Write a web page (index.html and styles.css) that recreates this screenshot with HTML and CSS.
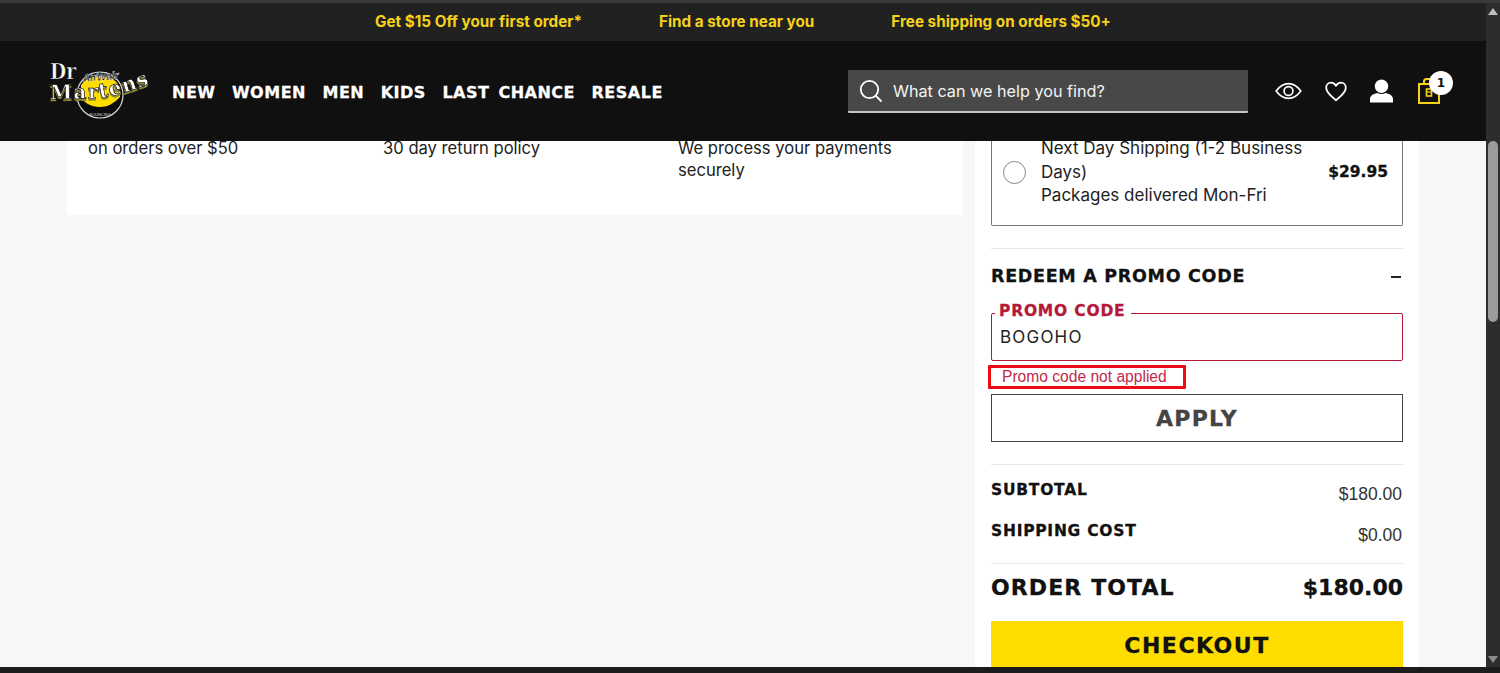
FILE: index.html
```html
<!DOCTYPE html>
<html lang="en">
<head>
  <meta charset="UTF-8">
  <meta name="viewport" content="width=device-width, initial-scale=1.0">
  <title>Dr. Martens - Checkout</title>
  <link rel="stylesheet" href="styles.css">
</head>
<body>
  <div class="window">
    <div class="viewport">
      <div class="promo-bar">
        <span>Get $15 Off your first order*</span>
        <span>Find a store near you</span>
        <span>Free shipping on orders $50+</span>
      </div>

      <header class="site-header">
        <svg class="logo" viewBox="0 -4 104 72" width="104" height="72" role="img" aria-label="Dr. Martens AirWair">
          <defs>
            <path id="logo-curve" d="M2 40 L46 39.5 Q72 37 103 24"/>
          </defs>
          <circle cx="52" cy="36" r="23" fill="#0c0c0c" stroke="#d8d8d8" stroke-width="1.2"/>
          <path d="M33 26 Q38 18 52 17 Q66 17 72 28 L72 38 Q62 49 50 48 Q38 47 33 38 Z" fill="#ffdd00"/>
          <text x="35" y="23" class="logo-air" textLength="36" lengthAdjust="spacingAndGlyphs" transform="rotate(-5 35 23)">AirWair</text>
          <text x="2" y="20" class="logo-dr" textLength="26" lengthAdjust="spacingAndGlyphs">Dr</text>
          <text class="logo-martens"><textPath href="#logo-curve">Martens</textPath></text>
          <text x="52" y="57" class="logo-small">BOUNCING</text>
        </svg>
        <nav class="main-nav">
          <a>NEW</a>
          <a>WOMEN</a>
          <a>MEN</a>
          <a>KIDS</a>
          <a>LAST CHANCE</a>
          <a>RESALE</a>
        </nav>
        <div class="search">
          <svg viewBox="0 0 24 24" width="24" height="24" fill="none" stroke="#fff" stroke-width="1.8" stroke-linecap="round">
            <circle cx="10.5" cy="10.5" r="8.7"/>
            <path d="M17 17l5 5"/>
          </svg>
          <span>What can we help you find?</span>
        </div>
        <div class="header-icons">
          <svg viewBox="0 0 28 18" width="27" height="18" fill="none" stroke="#fff" stroke-width="1.7">
            <path d="M1.2 9C5 3.8 9 1.4 14 1.4S23 3.8 26.8 9C23 14.2 19 16.6 14 16.6S5 14.2 1.2 9Z"/>
            <circle cx="14" cy="9" r="4.6"/>
          </svg>
          <svg viewBox="0 0 24 22" width="22" height="21" fill="none" stroke="#fff" stroke-width="2" stroke-linejoin="round">
            <path d="M12 20.5C7 16 1.3 12.3 1.3 6.8 1.3 3.6 3.7 1.4 6.6 1.4c2.2 0 4.2 1.2 5.4 3.4 1.2-2.2 3.2-3.4 5.4-3.4 2.9 0 5.3 2.2 5.3 5.4 0 5.5-5.7 9.2-10.7 13.7Z"/>
          </svg>
          <svg viewBox="0 0 24 24" width="23" height="24" fill="#fff">
            <circle cx="12" cy="7" r="7"/>
            <path d="M0 24v-3.5c0-3.5 3-5.5 7.5-6.5 2.8 1.5 6.200 1.5 9 0 4.500 1 7.500 3 7.500 6.500V24Z"/>
          </svg>
          <div class="cart">
            <svg viewBox="0 0 22 26" width="22" height="26" fill="none" stroke="#f5d21a" stroke-width="2">
              <rect x="1" y="6" width="20" height="19"/>
              <path d="M6 6V3.5C6 2 7 1 8.5 1h5C15 1 16 2 16 3.5V6"/>
              <rect x="8.5" y="11" width="5" height="7" stroke-width="1.6"/>
              <path d="M8.5 14h5" stroke-width="1.2"/>
            </svg>
            <span class="cart-count">1</span>
          </div>
        </div>
      </header>

      <main class="page">
        <section class="perks">
          <p>on orders over $50</p>
          <p>30 day return policy</p>
          <p>We process your payments securely</p>
        </section>

        <aside class="summary">
          <div class="ship-option">
            <span class="radio"></span>
            <div class="ship-text">
              Next Day Shipping (1-2 Business Days)<br>
              Packages delivered Mon-Fri
            </div>
            <b class="ship-price">$29.95</b>
          </div>

          <div class="promo">
            <div class="promo-head">
              <h3>REDEEM A PROMO CODE</h3>
              <span class="minus"></span>
            </div>
            <div class="promo-field">
              <label>PROMO CODE</label>
              <span>BOGOHO</span>
            </div>
            <div class="promo-error">Promo code not applied</div>
            <button class="apply">APPLY</button>
          </div>

          <div class="costs">
            <div class="cost-row"><b>SUBTOTAL</b><span>$180.00</span></div>
            <div class="cost-row"><b>SHIPPING COST</b><span>$0.00</span></div>
          </div>

          <div class="total-row"><b class="total-label">ORDER TOTAL</b><b>$180.00</b></div>
          <button class="checkout">CHECKOUT</button>
        </aside>
      </main>
    </div>

    <div class="scrollbar">
      <div class="arrow-up"></div>
      <div class="thumb"></div>
      <div class="arrow-down"></div>
    </div>
  </div>
  <div class="bottom-strip"></div>
</body>
</html>
```

FILE: styles.css
```css
:root {
  --dm-yellow: #ffdd00;
  --dm-red: #b5193a;
  --wide: 'DejaVu Sans', Verdana, sans-serif;
}
* {
  box-sizing: border-box;
}
html, body {
  height: 100%;
}
body {
  margin: 0;
  display: flex;
  flex-direction: column;
  overflow: hidden;
  border-top: 3px solid #3a3a3a;
  font-family: 'Inter', 'Liberation Sans', sans-serif;
  color: #222;
  background-color: #f7f7f7;
}
.window {
  flex: 1;
  min-height: 0;
  display: flex;
}
.viewport {
  flex: 1;
  min-width: 0;
  display: flex;
  flex-direction: column;
}
.bottom-strip {
  height: 6px;
  background-color: #1c1c1c;
}

/* top promo bar */
.promo-bar {
  height: 38px;
  flex: none;
  display: flex;
  justify-content: center;
  align-items: center;
  gap: 77px;
  padding-bottom: 2px;
  background-color: #212121;
  color: #f5d21a;
  font-size: 15.25px;
  font-weight: 700;
}

/* header */
.site-header {
  height: 100px;
  flex: none;
  position: relative;
  z-index: 2;
  display: flex;
  align-items: center;
  padding-left: 48px;
  background-color: #101010;
}
.logo {
  flex: none;
}
.logo-dr, .logo-martens {
  font-family: 'DejaVu Serif', serif;
  font-weight: 700;
  fill: #fff;
  stroke: #000;
  stroke-width: 0.6px;
}
.logo-dr {
  font-size: 23px;
}
.logo-martens {
  font-size: 20px;
  letter-spacing: 1.4px;
  filter: drop-shadow(0 2px 0 #8f8a33);
}
.logo-air {
  font-family: 'Liberation Sans', sans-serif;
  font-style: italic;
  font-weight: 700;
  font-size: 11px;
  fill: #000;
  stroke: #fff;
  stroke-width: 0.4px;
}
.logo-small {
  font-family: 'Liberation Sans', sans-serif;
  font-size: 4px;
  text-anchor: middle;
  fill: #ddd;
}
.main-nav {
  display: flex;
  gap: 16.5px;
  margin-left: 20px;
  margin-top: 2px;
}
.main-nav a {
  font-family: var(--wide);
  font-size: 16px;
  font-weight: 700;
  letter-spacing: 0.5px;
  word-spacing: 3px;
  -webkit-text-stroke: 0.3px #fff;
  color: #fff;
}
.search {
  width: 400px;
  height: 43px;
  margin-left: auto;
  margin-top: 1px;
  display: flex;
  align-items: center;
  gap: 10px;
  padding-left: 11px;
  border-bottom: 2px solid #c4c4c4;
  border-radius: 1px;
  background-color: #484848;
  color: #f4f4f4;
  font-size: 16.2px;
}
.header-icons {
  display: flex;
  align-items: center;
  gap: 23px;
  margin-left: 27px;
  margin-right: 46px;
}
.cart {
  position: relative;
  display: flex;
  margin-left: 2px;
}
.cart-count {
  position: absolute;
  top: -7px;
  right: -13px;
  width: 24px;
  height: 24px;
  border-radius: 50%;
  display: flex;
  justify-content: center;
  align-items: center;
  background-color: #fff;
  color: #111;
  font-family: var(--wide);
  font-size: 12px;
  font-weight: 700;
}

/* scrolled page body, the fixed header sits over the top of it */
.page {
  flex: 1;
  min-height: 0;
  display: flex;
  align-items: flex-start;
  gap: 12px;
  padding-left: 67px;
}
.perks {
  width: 896px;
  flex: none;
  display: grid;
  grid-template-columns: repeat(3, 295px);
  padding: 0 0 34px 21px;
  margin-top: -4px;
  background-color: #fff;
  font-size: 16.6px;
  line-height: 22px;
}
.perks p {
  margin: 0;
  padding-right: 30px;
}
.summary {
  width: 443px;
  flex: none;
  padding: 0 15px 0 16px;
  margin-top: -12px;
  background-color: #fff;
  font-size: 16px;
  line-height: 22px;
}
.ship-option {
  display: flex;
  align-items: center;
  gap: 15px;
  padding: 8px 14px 17px 11px;
  border: 1px solid #777;
  border-top: 0;
  border-radius: 0 0 2px 2px;
  font-size: 17px;
  line-height: 23.5px;
}
.radio {
  width: 23px;
  height: 23px;
  flex: none;
  border: 1px solid #888;
  border-radius: 50%;
  background-color: #fff;
}
.ship-text {
  flex: 1;
}
.ship-price {
  font-family: var(--wide);
  font-size: 15.5px;
  -webkit-text-stroke: 0.3px #111;
  color: #111;
}
.promo {
  margin-top: 22px;
  padding-top: 16px;
  border-top: 1px solid #e5e5e5;
}
.promo-head {
  display: flex;
  justify-content: space-between;
  align-items: center;
  padding-right: 2px;
}
.promo-head h3 {
  margin: 0;
  font-family: var(--wide);
  font-size: 17.5px;
  line-height: 22px;
  letter-spacing: 0.7px;
  -webkit-text-stroke: 0.3px #111;
  color: #111;
}
.minus {
  width: 10px;
  height: 2px;
  margin-top: 3px;
  background-color: #222;
}
.promo-field {
  position: relative;
  height: 48px;
  margin-top: 26px;
  display: flex;
  align-items: center;
  padding-left: 8px;
  border: 1px solid var(--dm-red);
  border-radius: 2px;
  font-size: 17px;
  letter-spacing: 1.2px;
}
.promo-field label {
  position: absolute;
  top: -13px;
  left: 3px;
  padding: 0 6px 0 4px;
  background-color: #fff;
  font-family: var(--wide);
  font-size: 15.5px;
  line-height: 20px;
  font-weight: 700;
  letter-spacing: 0.8px;
  -webkit-text-stroke: 0.3px var(--dm-red);
  color: var(--dm-red);
}
.promo-error {
  width: 198px;
  height: 24px;
  margin: 4px 0 5px -3px;
  padding-left: 11px;
  border: 3px solid #ee0a14;
  border-radius: 1px;
  font-family: 'Liberation Sans', sans-serif;
  font-size: 15.6px;
  line-height: 18px;
  color: #c0294a;
}
.apply, .checkout {
  display: block;
  width: 100%;
  font-family: var(--wide);
  font-size: 22px;
  font-weight: 700;
}
.apply {
  height: 48px;
  padding-top: 3px;
  border: 1px solid #444;
  border-radius: 0;
  background-color: #fff;
  color: #444;
  letter-spacing: 1.2px;
  -webkit-text-stroke: 0.3px #444;
}
.costs {
  margin-top: 22px;
  padding-top: 14px;
  border-top: 1px solid #e5e5e5;
}
.cost-row {
  display: flex;
  justify-content: space-between;
  height: 41px;
}
.cost-row b {
  padding-top: 1px;
  font-family: var(--wide);
  font-size: 15.5px;
  line-height: 20px;
  letter-spacing: 0.75px;
  -webkit-text-stroke: 0.3px #111;
  color: #111;
}
.cost-row span {
  padding: 4px 1px 0 0;
  font-family: 'Liberation Sans', sans-serif;
  font-size: 17.5px;
  color: #333;
}
.total-row {
  display: flex;
  justify-content: space-between;
  align-items: center;
  height: 48px;
  margin-top: 2px;
  padding-top: 2px;
  border-top: 1px solid #e5e5e5;
  font-family: var(--wide);
  font-size: 22px;
  -webkit-text-stroke: 0.3px #111;
  color: #111;
}
.total-label {
  letter-spacing: 1.1px;
}
.checkout {
  height: 58px;
  margin-top: 10px;
  padding-bottom: 10px;
  border: 0;
  background-color: var(--dm-yellow);
  color: #111;
  letter-spacing: 1.5px;
  -webkit-text-stroke: 0.3px #111;
}

/* browser scrollbar */
.scrollbar {
  width: 14px;
  flex: none;
  position: relative;
  background-color: #2d2d2d;
}
.thumb {
  position: absolute;
  top: 138px;
  left: 2px;
  width: 10px;
  height: 181px;
  border-radius: 5px;
  background-color: #9b9b9b;
}
.arrow-up, .arrow-down {
  position: absolute;
  left: 2px;
  border-left: 5px solid transparent;
  border-right: 5px solid transparent;
}
.arrow-up {
  top: 5px;
  border-bottom: 7px solid #bdbdbd;
}
.arrow-down {
  bottom: 4px;
  border-top: 7px solid #8c8c8c;
}
```
